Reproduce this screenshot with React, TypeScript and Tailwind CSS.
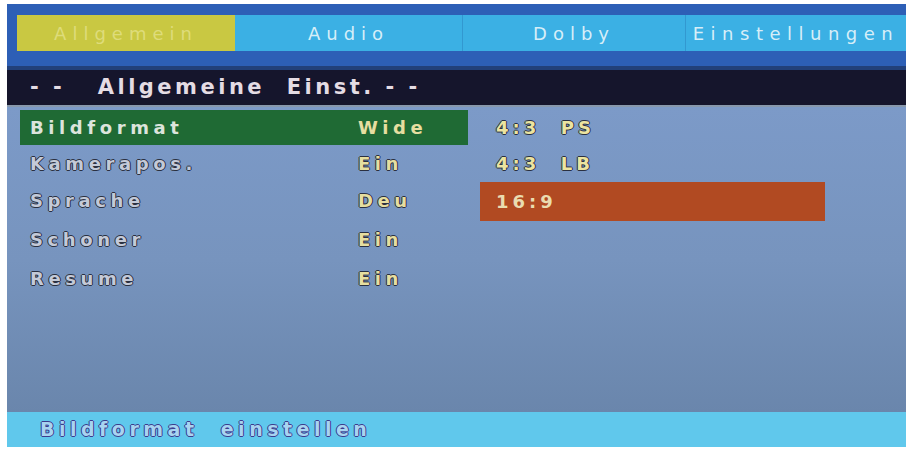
import React from "react";

const tabs = ["Allgemein", "Audio", "Dolby", "Einstellungen"];

const rows = [
  { label: "Bildformat", value: "Wide", h: "h-[35px]", selected: true },
  { label: "Kamerapos.", value: "Ein", h: "h-[36px]", selected: false },
  { label: "Sprache", value: "Deu", h: "h-[39px]", selected: false },
  { label: "Schoner", value: "Ein", h: "h-[39px]", selected: false },
  { label: "Resume", value: "Ein", h: "h-[39px]", selected: false },
];

const options = [
  { text: "4:3  PS", h: "h-[35px]", active: false },
  { text: "4:3  LB", h: "h-[36px]", active: false },
  { text: "16:9", h: "h-[39px]", active: true },
];

const outline =
  "[text-shadow:1px_0_0_#2a3040,-1px_0_0_#2a3040,0_1px_0_#2a3040,0_-1px_0_#2a3040]";

export default function App() {
  return (
    <div className="w-[909px] h-[451px] bg-white pl-[7px] pt-[4px] font-['DejaVu_Sans',sans-serif]">
      <div className="w-[899px] h-[443px] flex flex-col bg-[#6f8cb4]">
        {/* tab bar */}
        <div className="h-[62px] bg-[#2d5fb6] pl-[10px] pt-[11px]">
          <div className="flex h-[36px] bg-[#3bb0e4]">
            {tabs.map((t, i) => (
              <div
                key={t}
                className={
                  i === 0
                    ? "w-[218px] flex items-center justify-center bg-[#c9c842] text-[#dedc7a] text-[18px] tracking-[6px]"
                    : i === 1
                    ? "w-[227px] flex items-center justify-center text-[#d6eef8] text-[18px] tracking-[6px]"
                    : i === 2
                    ? "w-[223px] flex items-center justify-center border-l border-[#3298d0] text-[#d6eef8] text-[18px] tracking-[6px]"
                    : "flex-1 flex items-center justify-center border-l border-[#3298d0] text-[#d6eef8] text-[18px] tracking-[6.5px] whitespace-nowrap"
                }
              >
                {t}
              </div>
            ))}
          </div>
        </div>
        <div className="h-[4px] bg-[#22407a]" />
        {/* header */}
        <div className="h-[35px] bg-[#15152c] flex items-center pl-[23px] text-[#e4dce4] font-bold text-[21px] tracking-[3.5px] whitespace-pre">
          {"- -   Allgemeine  Einst. - -"}
        </div>
        <div className="h-[2px] bg-[#8898ac]" />
        {/* content */}
        <div className="flex-1 flex bg-gradient-to-b from-[#7c9ac8] via-[#7794be] to-[#6a86ac] pt-[3px]">
          <div className="w-[448px] ml-[13px] flex flex-col">
            {rows.map((r) => (
              <div
                key={r.label}
                className={`${r.h} flex items-center ${
                  r.selected ? "bg-[#1f6a34]" : ""
                }`}
              >
                <div
                  className={`w-[338px] pl-[10px] text-[18px] font-bold tracking-[4.6px] whitespace-nowrap ${
                    r.selected ? "text-[#dce4dc]" : `text-[#c4cad8] ${outline}`
                  }`}
                >
                  {r.label}
                </div>
                <div
                  className={`text-[18px] font-bold tracking-[4.5px] text-[#e6dea0] ${
                    r.selected ? "" : outline
                  }`}
                >
                  {r.value}
                </div>
              </div>
            ))}
          </div>
          <div className="ml-[12px] flex flex-col">
            {options.map((o) => (
              <div
                key={o.text}
                className={`${o.h} flex items-center ${
                  o.active ? "w-[345px] bg-[#b14a22] pl-[16px] mt-[1px]" : "pl-[16px]"
                }`}
              >
                <span
                  className={`text-[18px] font-bold tracking-[4px] whitespace-pre ${
                    o.active ? "text-[#eadcb0]" : `text-[#ece4a0] ${outline}`
                  }`}
                >
                  {o.text}
                </span>
              </div>
            ))}
          </div>
        </div>
        {/* footer */}
        <div className="h-[35px] bg-[#60c8ec] flex items-center pl-[33px]">
          <span className="text-[19px] font-bold tracking-[4.5px] text-[#a8d4f0] whitespace-pre [text-shadow:1px_0_0_#3c3c8c,-1px_0_0_#3c3c8c,0_1px_0_#3c3c8c,0_-1px_0_#3c3c8c]">
            {"Bildformat  einstellen"}
          </span>
        </div>
      </div>
    </div>
  );
}
